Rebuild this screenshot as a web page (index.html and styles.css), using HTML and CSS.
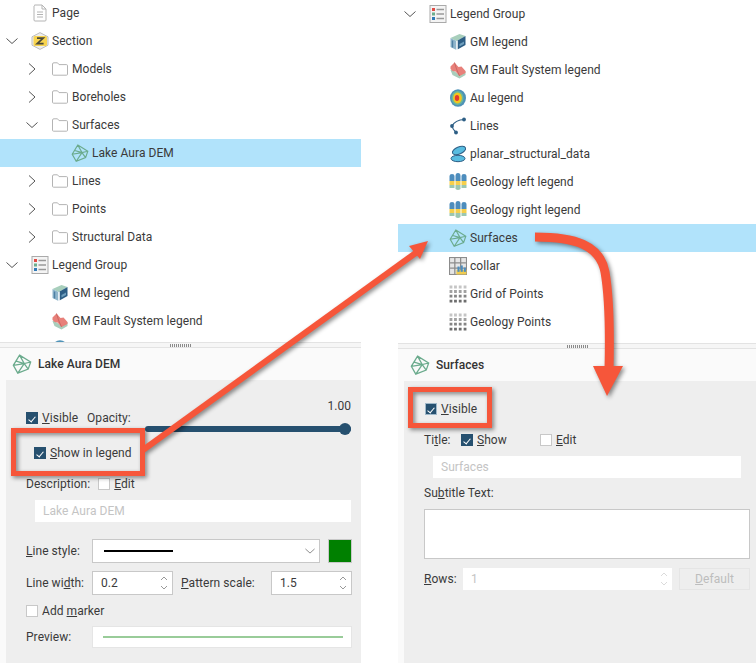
FILE: index.html
```html
<!DOCTYPE html>
<html lang="en">
<head>
<meta charset="utf-8">
<title>Legend settings</title>
<link rel="stylesheet" href="styles.css">
</head>
<body>
<svg class="defs" aria-hidden="true">
  <symbol id="down" viewBox="0 0 12 12"><path d="M0.5 3.5 6 8.5 11.5 3.5" fill="none" stroke="#555" stroke-width="1"/></symbol>
  <symbol id="right" viewBox="0 0 12 12"><path d="M3 0.5 9 6 3 11.5" fill="none" stroke="#555" stroke-width="1"/></symbol>
  <symbol id="page" viewBox="0 0 16 18"><path d="M2.5 1.5Q2 1 3 1H10L14 5V16Q14 17 13 17H3Q2 17 2 16V2Z M10 1V5H14" fill="#fff" stroke="#b4b4b4"/><path d="M5 8H11M5 10.5H11M5 13H11" stroke="#b4b4b4"/></symbol>
  <symbol id="folder" viewBox="-1 -2 18 18"><path d="M0.5 2Q0.5 0.8 2 0.8H5.5L7 2.6H14.5Q15.5 2.6 15.5 3.8V12.2Q15.5 13.2 14.5 13.2H1.5Q0.5 13.2 0.5 12.2Z" fill="#fff" stroke="#b4b4b4"/></symbol>
  <symbol id="section" viewBox="0 0 18 18"><path d="M9 0.6 17 4.8V13.2L9 17.4 1 13.2V4.8Z" fill="#eee" stroke="#bdbdbd"/><rect x="2.5" y="4" width="13.5" height="10" rx="1.5" fill="#f8d44f"/><path d="M6 6.2H12.2L6.2 11.6H12.6" fill="none" stroke="#4a4a3a" stroke-width="1.7"/></symbol>
  <symbol id="surface" viewBox="0 0 18 18"><path d="M6.8 1 16.8 7.2 14.6 13.6 5.2 17.2 1.2 10.2ZM6.8 1 11 8.6 16.8 7.2M11 8.6 14.6 13.6M11 8.6 3.8 6.5M11 8.6 5.2 17.2M1.2 10.2 11 8.6" fill="none" stroke="#6bab8d" stroke-width="1.15"/></symbol>
  <symbol id="legend" viewBox="0 0 17 18"><rect x="0.5" y="0.5" width="16" height="17" fill="#f4f4f4" stroke="#aaa"/><rect x="2.5" y="3" width="3" height="3" fill="#e24b45"/><rect x="2.5" y="7.5" width="3" height="3" fill="#6cae8e"/><rect x="2.5" y="12" width="3" height="3" fill="#2f7ab8"/><path d="M7 4.5H14.5M7 9H14.5M7 13.5H14.5" stroke="#999" stroke-width="1.4"/></symbol>
  <symbol id="gm" viewBox="0 0 17 18"><path d="M1 5 10 1 16 3 9 7 7 8Z" fill="#a8cfbc"/><path d="M1 5 7 8V17L1 14Z" fill="#8fb5cb"/><path d="M8 7.5 16 3V12L8 16.5Z" fill="#2d5e85"/><path d="M7.5 8V17" stroke="#fff"/><path d="M3 7.5V14.5" stroke="#4d7fa3" stroke-width="1.4"/><path d="M10 11 14.5 8.5V11L10 13.5Z" fill="#6f9fbd"/></symbol>
  <symbol id="fault" viewBox="0 0 17 18"><path d="M1 9 3 14 10 17.5 16 14 16 10 9 13 3 9Z" fill="#a9cdbb"/><path d="M1 5.5 5 1.5 9 6 12 5.5 16 10 16 12 10 15 6 10.5 3 10 1 8Z" fill="#e8807a"/><path d="M5 1.5 7 8 10 15" fill="none" stroke="#c4605c" stroke-width="0.8"/></symbol>
  <symbol id="au" viewBox="0 0 16 18"><ellipse cx="8" cy="9" rx="8" ry="8.8" fill="#4f93b8"/><ellipse cx="7.5" cy="9" rx="6" ry="7" fill="#6cb89a"/><ellipse cx="7.5" cy="9" rx="4.4" ry="5.4" fill="#f3c61f"/><ellipse cx="7" cy="9" rx="2.2" ry="3" fill="#e23a30"/></symbol>
  <symbol id="lines" viewBox="0 0 16 18"><path d="M14.5 2.5Q5 3 2 9 2.5 12 6 15.5" fill="none" stroke="#2d5e85" stroke-width="1.2"/><circle cx="14" cy="2.5" r="1.9" fill="#2d5e85"/><circle cx="2" cy="9" r="1.9" fill="#2d5e85"/><circle cx="6" cy="15.5" r="1.9" fill="#2d5e85"/></symbol>
  <symbol id="planar" viewBox="0 0 16 18"><ellipse cx="9" cy="5.5" rx="7" ry="3.5" transform="rotate(-22 9 5.5)" fill="#58bce0" stroke="#2d5e85"/><ellipse cx="8" cy="13.5" rx="7" ry="3.2" fill="#58bce0" stroke="#2d5e85"/></symbol>
  <symbol id="geology" viewBox="0 0 17 18"><path d="M0 3Q0 1 2.5 1T5 3V8H0ZM6 3Q6 0 8.5 0T11 3V8H6ZM12 3Q12 1 14.5 1T17 3V8H12Z" fill="#4d8dbd"/><path d="M0 8H5V12H0ZM6 8H11V12H6ZM12 8H17V12H12Z" fill="#f6cf4b"/><path d="M0 12H5V15H0ZM12 12H17V15H12Z" fill="#9cc7b0"/><path d="M6 12H11V16Q8.5 18 6 16Z" fill="#9cc7b0"/></symbol>
  <symbol id="collar" viewBox="0 0 17 17"><rect x="0.5" y="0.5" width="16" height="16" fill="#e6e6e6" stroke="#8c8c8c"/><path d="M1 5.5H16M1 10.5H16M5.5 1V16M11 1V16" stroke="#8c8c8c" stroke-width="1.2"/><rect x="7" y="12" width="9.5" height="4.5" fill="#f0cc50"/><rect x="8" y="9" width="2" height="5" fill="#4d8dbd"/><rect x="11" y="8" width="2" height="6" fill="#4d8dbd"/><rect x="14" y="10" width="2" height="4" fill="#4d8dbd"/></symbol>
  <symbol id="points" viewBox="0 0 16 16"><g fill="#6e6e6e"><path d="M0.5 0.5h2.5v2.5H0.5zM4.5 0.5h2.5v2.5H4.5zM8.7 0.5h2.5v2.5H8.7zM13 0.5h2.5v2.5H13z" opacity=".4"/><path d="M0.5 4.5h2.5v2.5H0.5zM4.5 4.5h2.5v2.5H4.5zM8.7 4.5h2.5v2.5H8.7zM13 4.5h2.5v2.5H13z" opacity=".65"/><path d="M0.5 8.7h2.5v2.5H0.5zM4.5 8.7h2.5v2.5H4.5zM8.7 8.7h2.5v2.5H8.7zM13 8.7h2.5v2.5H13z" opacity=".85"/><path d="M0.5 13h2.5v2.5H0.5zM4.5 13h2.5v2.5H4.5zM8.7 13h2.5v2.5H8.7zM13 13h2.5v2.5H13z"/></g></symbol>
  <symbol id="spin" viewBox="0 0 8 16"><path d="M1 5 4 2 7 5M1 11 4 14 7 11" fill="none" stroke="#999"/></symbol>
</svg>

<main class="page">
  <section class="col col-left">
    <div class="tree tree-left">
      <div class="row l0"><span class="chev"></span><svg class="ico"><use href="#page"/></svg><span>Page</span></div>
      <div class="row l0"><svg class="chev"><use href="#down"/></svg><svg class="ico"><use href="#section"/></svg><span>Section</span></div>
      <div class="row l1"><svg class="chev"><use href="#right"/></svg><svg class="ico"><use href="#folder"/></svg><span>Models</span></div>
      <div class="row l1"><svg class="chev"><use href="#right"/></svg><svg class="ico"><use href="#folder"/></svg><span>Boreholes</span></div>
      <div class="row l1"><svg class="chev"><use href="#down"/></svg><svg class="ico"><use href="#folder"/></svg><span>Surfaces</span></div>
      <div class="row l2 selected"><span class="chev"></span><svg class="ico"><use href="#surface"/></svg><span>Lake Aura DEM</span></div>
      <div class="row l1"><svg class="chev"><use href="#right"/></svg><svg class="ico"><use href="#folder"/></svg><span>Lines</span></div>
      <div class="row l1"><svg class="chev"><use href="#right"/></svg><svg class="ico"><use href="#folder"/></svg><span>Points</span></div>
      <div class="row l1"><svg class="chev"><use href="#right"/></svg><svg class="ico"><use href="#folder"/></svg><span>Structural Data</span></div>
      <div class="row l0"><svg class="chev"><use href="#down"/></svg><svg class="ico"><use href="#legend"/></svg><span>Legend Group</span></div>
      <div class="row l1"><span class="chev"></span><svg class="ico"><use href="#gm"/></svg><span>GM legend</span></div>
      <div class="row l1"><span class="chev"></span><svg class="ico"><use href="#fault"/></svg><span>GM Fault System legend</span></div>
      <div class="row l1"><span class="chev"></span><svg class="ico"><use href="#au"/></svg></div>
    </div>
    <div class="splitter"><span class="grip"></span></div>
    <div class="panel">
      <header class="panel-head"><svg class="head-ico"><use href="#surface"/></svg><strong>Lake Aura DEM</strong></header>
      <div class="form form-left">
        <div class="opacity-row">
          <div class="opacity-labels">
            <label class="check"><i class="box on"></i><span><u>V</u>isible</span></label>
            <span class="opacity-label">Opacity:</span>
          </div>
          <div class="opacity-control">
            <div class="opacity-value">1.00</div>
            <div class="slider"><i class="knob"></i></div>
          </div>
        </div>
        <label class="check show-legend"><i class="box on"></i><span><u>S</u>how in legend</span></label>
        <div class="line desc-row"><span>Description:</span><label class="check"><i class="box"></i><span><u>E</u>dit</span></label></div>
        <div class="input desc-input">Lake Aura DEM</div>
        <div class="line style-row">
          <span class="lab66"><u>L</u>ine style:</span>
          <div class="combo"><i class="stroke"></i><svg class="combo-chev"><use href="#down"/></svg></div>
          <i class="swatch"></i>
        </div>
        <div class="line width-row">
          <span class="lab66">Line wi<u>d</u>th:</span>
          <div class="spin spin-s">0.2<svg class="spin-btn"><use href="#spin"/></svg></div>
          <span class="lab-pattern"><u>P</u>attern scale:</span>
          <div class="spin spin-s">1.5<svg class="spin-btn"><use href="#spin"/></svg></div>
        </div>
        <label class="check marker-row"><i class="box"></i><span>Add <u>m</u>arker</span></label>
        <div class="line preview-row">
          <span class="lab66">Preview:</span>
          <div class="preview"><i class="preview-line"></i></div>
        </div>
      </div>
    </div>
  </section>

  <section class="col col-right">
    <div class="tree tree-right">
      <div class="row l0"><svg class="chev"><use href="#down"/></svg><svg class="ico"><use href="#legend"/></svg><span>Legend Group</span></div>
      <div class="row l1"><span class="chev"></span><svg class="ico"><use href="#gm"/></svg><span>GM legend</span></div>
      <div class="row l1"><span class="chev"></span><svg class="ico"><use href="#fault"/></svg><span>GM Fault System legend</span></div>
      <div class="row l1"><span class="chev"></span><svg class="ico"><use href="#au"/></svg><span>Au legend</span></div>
      <div class="row l1"><span class="chev"></span><svg class="ico"><use href="#lines"/></svg><span>Lines</span></div>
      <div class="row l1"><span class="chev"></span><svg class="ico"><use href="#planar"/></svg><span>planar_structural_data</span></div>
      <div class="row l1"><span class="chev"></span><svg class="ico"><use href="#geology"/></svg><span>Geology left legend</span></div>
      <div class="row l1"><span class="chev"></span><svg class="ico"><use href="#geology"/></svg><span>Geology right legend</span></div>
      <div class="row l1 selected"><span class="chev"></span><svg class="ico"><use href="#surface"/></svg><span>Surfaces</span></div>
      <div class="row l1"><span class="chev"></span><svg class="ico"><use href="#collar"/></svg><span>collar</span></div>
      <div class="row l1"><span class="chev"></span><svg class="ico"><use href="#points"/></svg><span>Grid of Points</span></div>
      <div class="row l1"><span class="chev"></span><svg class="ico"><use href="#points"/></svg><span>Geology Points</span></div>
    </div>
    <div class="splitter"><span class="grip"></span></div>
    <div class="panel">
      <header class="panel-head"><svg class="head-ico"><use href="#surface"/></svg><strong>Surfaces</strong></header>
      <div class="form form-right">
        <label class="check visible-r"><i class="box on focus"></i><span><u>V</u>isible</span></label>
        <div class="line title-row">
          <span class="lab-title">Ti<u>t</u>le:</span>
          <label class="check check-show"><i class="box on"></i><span><u>S</u>how</span></label>
          <label class="check"><i class="box"></i><span><u>E</u>dit</span></label>
        </div>
        <div class="input title-input">Surfaces</div>
        <div class="line subtitle-row"><span>Su<u>b</u>title Text:</span></div>
        <div class="textarea"></div>
        <div class="line rows-row">
          <span class="lab-rows"><u>R</u>ows:</span>
          <div class="spin spin-off">1<svg class="spin-btn faint"><use href="#spin"/></svg></div>
          <div class="btn-off"><u>D</u>efault</div>
        </div>
      </div>
    </div>
  </section>
</main>

<svg class="notes" viewBox="0 0 756 663" aria-hidden="true">
  <g class="note-shadow">
    <rect class="note-line" x="13.5" y="430.5" width="129" height="43"/>
    <path class="note-line thin" d="M143 450 417 252"/>
    <path class="note-fill" d="M428 241 409 246 420 259Z"/>
    <rect class="note-line" x="410.5" y="389.5" width="79" height="36"/>
    <path class="note-line thick" d="M535 237C575 237 600 245 605 272 609 295 610 330 609 370"/>
    <path class="note-fill" d="M593 366 623 366 607 396Z"/>
  </g>
</svg>
</body>
</html>
```
FILE: styles.css
```css
* { box-sizing: border-box; }
html, body { margin: 0; height: 663px; overflow: hidden; background: #fff; }
body {
  position: relative;
  font: 12px/16px Roboto, "Liberation Sans", sans-serif;
  letter-spacing: .05px;
  color: #3a3a3a;
}
.defs { position: absolute; width: 0; height: 0; }
.page { display: flex; gap: 37px; height: 663px; }
.col { display: flex; flex-direction: column; height: 663px; }
.col-left { width: 361px; }
.col-right { width: 358px; }

.tree { overflow: hidden; flex: none; }
.tree-left { height: 342px; }
.tree-left .row:first-child { margin-top: -1px; }
.tree-right { height: 343px; }
.row { display: flex; align-items: center; height: 28px; }
.l1 { padding-left: 20px; }
.l2 { padding-left: 40px; }
.selected { background: #b1e3fb; }
.chev { width: 12px; height: 12px; margin: 0 14px 0 6px; flex: none; }
.ico { width: 18px; height: 18px; margin-right: 3px; margin-left: -1px; flex: none; }

.splitter {
  flex: none; height: 6px; display: flex; justify-content: center; align-items: center;
  background: #f6f6f6; border-top: 1px solid #e3e3e3; border-bottom: 1px solid #e3e3e3;
}
.grip {
  width: 21px; height: 3px;
  background: repeating-linear-gradient(90deg, #8a8a8a 0 1px, transparent 1px 2px);
}
.panel { flex: 1; display: flex; flex-direction: column; background: #fafafa; }
.panel-head { display: flex; align-items: center; height: 32px; padding-left: 12px; flex: none; }
.panel-head strong { font-weight: 500; color: #333; }
.head-ico { width: 20px; height: 20px; margin-right: 6px; }
.form { flex: 1; margin-left: 6px; background: #eee; padding-left: 20px; display: flex; flex-direction: column; }
.form-left { padding-right: 9px; }
.form-right { padding-right: 6px; }

.check { display: inline-flex; align-items: center; height: 16px; }
.box { width: 12px; height: 12px; margin-right: 4px; background: #fff; border: 1px solid #c8c8c8; position: relative; flex: none; }
.box.on { background: #26506f; border-color: #26506f; }
.box.on.focus { border-color: #9fb8c9; }
.box.on::after {
  content: ""; position: absolute; left: 3px; top: 1.5px; width: 3px; height: 6px;
  border: solid #fff; border-width: 0 1.2px 1.2px 0; transform: rotate(40deg);
}
.line { display: flex; align-items: center; }

.opacity-row { display: flex; height: 38px; margin-top: 18px; flex: none; }
.opacity-labels { display: flex; margin-top: 12px; height: 16px; }
.opacity-label { margin-left: 9px; }
.opacity-control { margin-left: auto; margin-right: 1px; width: 206px; }
.opacity-value { text-align: right; }
.slider { position: relative; height: 6px; margin-top: 12px; background: #26506f; border-radius: 3px; }
.knob { position: absolute; right: 0; top: -3px; width: 12px; height: 12px; border-radius: 50%; background: #26506f; }
.show-legend { margin: 9px 0 0 8px; }
.desc-row { margin-top: 15px; height: 16px; }
.desc-row .check { margin-left: 8px; }
.input { height: 22px; background: #fff; color: #c4c4c4; padding-left: 8px; display: flex; align-items: center; flex: none; }
.desc-input { margin: 8px 1px 0 9px; }
.lab66 { width: 66px; flex: none; }
.style-row { margin-top: 17px; height: 24px; }
.combo { width: 228px; height: 24px; background: #fff; border: 1px solid #c8c8c8; display: flex; align-items: center; padding-left: 11px; position: relative; }
.stroke { width: 69px; height: 2px; background: #000; }
.combo-chev { width: 10px; height: 10px; margin-left: auto; margin-right: 4px; opacity: .8; }
.swatch { width: 24px; height: 24px; margin-left: 8px; background: #008000; border: 1px solid #c8c8c8; }
.width-row { margin-top: 8px; height: 24px; }
.spin { height: 24px; background: #fff; border: 1px solid #c8c8c8; display: flex; align-items: center; padding-left: 8px; }
.spin-s { width: 81px; }
.spin-btn { width: 8px; height: 16px; margin-left: auto; margin-right: 4px; }
.spin-btn.faint { opacity: .35; }
.lab-pattern { margin: 0 auto 0 8px; }
.marker-row { margin-top: 8px; }
.preview-row { margin-top: 7px; height: 22px; }
.preview { width: 260px; height: 22px; background: #fff; border: 1px solid #e5e5e5; display: flex; align-items: center; padding: 0 8px 0 10px; }
.preview-line { flex: 1; height: 2px; background: #99cc99; }

.visible-r { margin-top: 20px; margin-left: 1px; }
.title-row { margin-top: 15px; height: 16px; }
.lab-title { width: 37px; }
.check-show { width: 79px; }
.title-input { margin: 8px 9px 0 9px; }
.subtitle-row { margin-top: 7px; height: 16px; }
.textarea { height: 50px; margin-top: 8px; background: #fff; border: 1px solid #c8c8c8; flex: none; }
.rows-row { margin-top: 9px; height: 22px; }
.lab-rows { width: 39px; }
.spin-off { width: 209px; height: 22px; border: 0; color: #c4c4c4; }
.btn-off { width: 71px; height: 22px; margin-left: 7px; border: 1px solid #e5e5e5; color: #bdbdbd; display: flex; align-items: center; justify-content: center; }

.notes { position: absolute; left: 0; top: 0; width: 756px; height: 663px; pointer-events: none; }
.note-shadow { filter: drop-shadow(2px 2px 2px rgba(0, 0, 0, .45)); }
.note-line { fill: none; stroke: #f6563a; stroke-width: 5; }
.note-line.thin { stroke-width: 6; }
.note-line.thick { stroke-width: 9; }
.note-fill { fill: #f6563a; }
```
